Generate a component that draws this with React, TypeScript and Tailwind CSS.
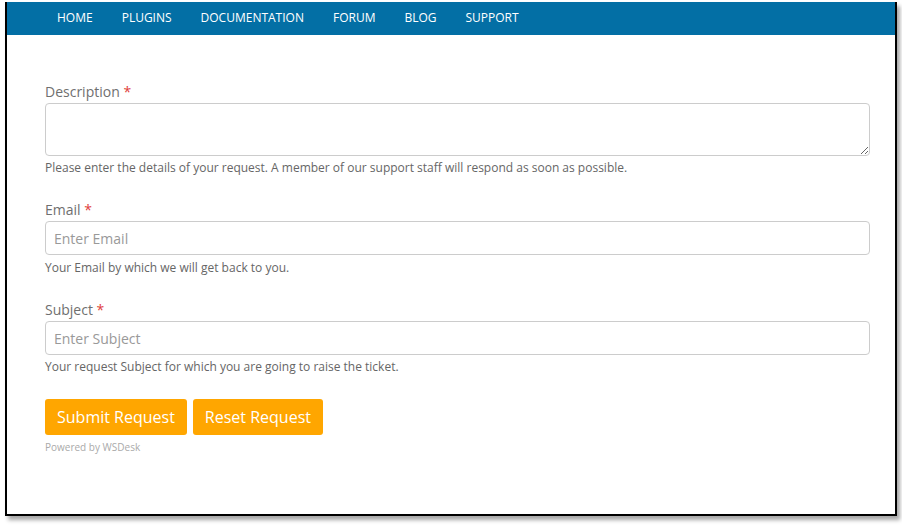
import React from "react";

const navItems = ["HOME", "PLUGINS", "DOCUMENTATION", "FORUM", "BLOG", "SUPPORT"];

const font = { fontFamily: "'Open Sans', 'Noto Sans', sans-serif" };

function Field({
  label,
  help,
  helpGap = "mt-[3px]",
  children,
}: {
  label: string;
  help: string;
  helpGap?: string;
  children: React.ReactNode;
}) {
  return (
    <div className="flex flex-col">
      <label className="text-[14px] leading-[20px] text-[#6f6f6f] mb-[1px]">
        {label} <span className="text-[#e0403a]">*</span>
      </label>
      {children}
      <p className={`${helpGap} text-[12px] leading-[17px] text-[#666]`}>{help}</p>
    </div>
  );
}

export default function App() {
  return (
    <div className="w-[902px] h-[526px] bg-white pt-[2px] pl-[5px]" style={font}>
      <div className="w-[892px] h-[514px] border-x-2 border-b-2 border-black bg-white shadow-[3px_4px_4px_rgba(0,0,0,0.35)]">
        {/* top nav */}
        <nav className="h-[33px] bg-[#036fa5] flex items-center pl-[50px] pb-[2px] gap-[29px]">
          {navItems.map((item) => (
            <a key={item} className="text-white text-[12px] leading-none">
              {item}
            </a>
          ))}
        </nav>

        {/* form */}
        <div className="ml-[38px] w-[825px] pt-[47px] flex flex-col gap-[24px]">
          <Field
            label="Description"
            help="Please enter the details of your request. A member of our support staff will respond as soon as possible."
          >
            <textarea className="h-[53px] w-full border border-[#cccccc] rounded-[4px] resize-y" />
          </Field>

          <Field label="Email" help="Your Email by which we will get back to you." helpGap="mt-[4px]">
            <input
              type="text"
              placeholder="Enter Email"
              className="h-[34px] w-full border border-[#cccccc] rounded-[4px] px-[8px] text-[14px] placeholder:text-[#999]"
            />
          </Field>

          <Field
            label="Subject"
            help="Your request Subject for which you are going to raise the ticket."
          >
            <input
              type="text"
              placeholder="Enter Subject"
              className="h-[34px] w-full border border-[#cccccc] rounded-[4px] px-[8px] text-[14px] placeholder:text-[#999]"
            />
          </Field>

          <div className="flex flex-col">
            <div className="flex gap-[6px]">
              <button className="h-[36px] px-[12px] bg-[#ffa600] text-white text-[16px] rounded-[3px]">
                Submit Request
              </button>
              <button className="h-[36px] px-[12px] bg-[#ffa600] text-white text-[16px] rounded-[3px]">
                Reset Request
              </button>
            </div>
            <p className="mt-[5px] text-[10px] leading-[14px] text-[#aaa]">Powered by WSDesk</p>
          </div>
        </div>
      </div>
    </div>
  );
}
